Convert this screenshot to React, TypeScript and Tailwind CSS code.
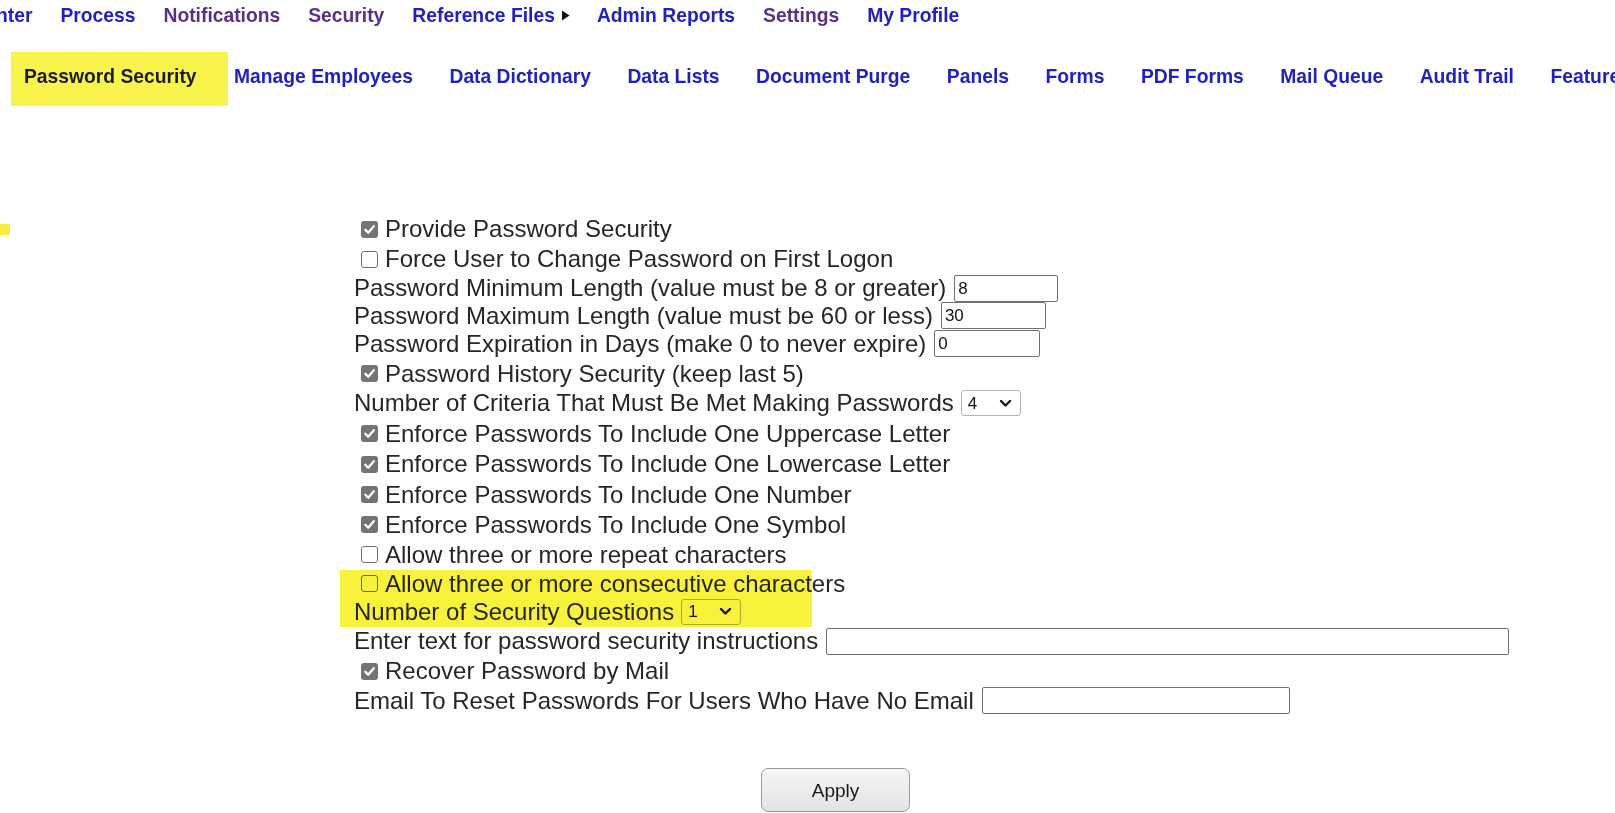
import React from "react";

const BLUE = "text-[#2020c8]";
const PURPLE = "text-[#58308a]";

function Check({ checked }: { checked: boolean }) {
  if (checked) {
    return (
      <span className="ml-[7px] mr-[7px] inline-flex h-[17px] w-[17px] shrink-0 items-center justify-center rounded-[3px] bg-[#747474]">
        <svg width="13" height="13" viewBox="0 0 13 13">
          <polyline points="2.3,6.8 5.2,9.7 10.8,3.2" fill="none" stroke="#ffffff" strokeWidth="2.3" strokeLinecap="round" strokeLinejoin="round" />
        </svg>
      </span>
    );
  }
  return (
    <span className="ml-[7px] mr-[7px] inline-block h-[17px] w-[17px] shrink-0 rounded-[3px] border-[1.5px] border-[#6f6f6f] bg-white" />
  );
}

function CheckRow({ checked, label, h }: { checked: boolean; label: string; h: string }) {
  return (
    <div className={`flex items-center ${h}`}>
      <Check checked={checked} />
      <span>{label}</span>
    </div>
  );
}

function TextInput({ value, w }: { value: string; w: string }) {
  return (
    <span className={`ml-[8px] inline-flex h-[27px] ${w} items-center rounded-[2px] border border-[#707070] bg-white pl-[3px] text-[17px] leading-none text-[#111]`}>
      {value}
    </span>
  );
}

function SelectBox({ value }: { value: string }) {
  return (
    <span className="ml-[7px] inline-flex h-[26px] w-[60px] items-center justify-between rounded-[3px] border border-[#b5b5b5] bg-white pl-[6px] pr-[8px] text-[17px] leading-none text-[#111]">
      <span>{value}</span>
      <svg width="13" height="9" viewBox="0 0 13 9">
        <polyline points="2,2 6.5,6.5 11,2" fill="none" stroke="#111" strokeWidth="2.4" strokeLinecap="round" strokeLinejoin="round" />
      </svg>
    </span>
  );
}

export default function App() {
  const row2 = [
    "Manage Employees",
    "Data Dictionary",
    "Data Lists",
    "Document Purge",
    "Panels",
    "Forms",
    "PDF Forms",
    "Mail Queue",
    "Audit Trail",
    "Features",
  ];
  return (
    <div
      className="relative h-[813px] w-[1615px] overflow-hidden bg-white"
      style={{ fontFamily: '"Liberation Sans", Arial, sans-serif' }}
    >
      {/* top nav */}
      <div className="flex h-[32px] items-center gap-[28px] whitespace-nowrap text-[19.3px] font-bold leading-none">
        <span className={`${BLUE} -ml-[4px]`}>nter</span>
        <span className={BLUE}>Process</span>
        <span className={PURPLE}>Notifications</span>
        <span className={PURPLE}>Security</span>
        <span className={`${BLUE} inline-flex items-center`}>
          Reference Files
          <svg className="ml-[6px]" width="9" height="11" viewBox="0 0 9 11">
            <polygon points="1,0.5 8.5,5.5 1,10.5" fill="#111" />
          </svg>
        </span>
        <span className={`${BLUE} -ml-[1px]`}>Admin Reports</span>
        <span className={PURPLE}>Settings</span>
        <span className={BLUE}>My Profile</span>
      </div>

      {/* second nav */}
      <div className="mt-[20px] flex h-[54px] items-center whitespace-nowrap text-[19.3px] font-bold leading-none">
        <div className="ml-[11px] flex h-[54px] w-[217px] shrink-0 items-center bg-[#f8f44c] pb-[4px] pl-[13px] text-[#1c1c1c]">
          Password Security
        </div>
        <div className={`ml-[6px] flex items-center gap-[36.5px] pb-[4px] ${BLUE}`}>
          {row2.map((t) => (
            <span key={t}>{t}</span>
          ))}
        </div>
      </div>

      {/* yellow marker at left */}
      <div className="absolute left-0 top-[224px] h-[11px] w-[10px] bg-[#f5ef3c]" />

      {/* form */}
      <div className="mt-[108px] pl-[354px] text-[24px] leading-none text-[#262626] whitespace-nowrap">
        <CheckRow checked label="Provide Password Security" h="h-[30px]" />
        <CheckRow checked={false} label="Force User to Change Password on First Logon" h="h-[30px]" />
        <div className="flex h-[28px] items-center">
          <span>Password Minimum Length (value must be 8 or greater)</span>
          <TextInput value="8" w="w-[104px]" />
        </div>
        <div className="flex h-[27.3px] items-center">
          <span>Password Maximum Length (value must be 60 or less)</span>
          <TextInput value="30" w="w-[105px]" />
        </div>
        <div className="flex h-[29.4px] items-center">
          <span>Password Expiration in Days (make 0 to never expire)</span>
          <TextInput value="0" w="w-[106px]" />
        </div>
        <CheckRow checked label="Password History Security (keep last 5)" h="h-[29.8px]" />
        <div className="flex h-[29.9px] items-center">
          <span>Number of Criteria That Must Be Met Making Passwords</span>
          <SelectBox value="4" />
        </div>
        <CheckRow checked label="Enforce Passwords To Include One Uppercase Letter" h="h-[30.4px]" />
        <CheckRow checked label="Enforce Passwords To Include One Lowercase Letter" h="h-[30.6px]" />
        <CheckRow checked label="Enforce Passwords To Include One Number" h="h-[30.6px]" />
        <CheckRow checked label="Enforce Passwords To Include One Symbol" h="h-[30px]" />
        <CheckRow checked={false} label="Allow three or more repeat characters" h="h-[29.8px]" />
        <CheckRow checked={false} label="Allow three or more consecutive characters" h="h-[28px]" />
        <div className="flex h-[28.4px] items-center">
          <span>Number of Security Questions</span>
          <SelectBox value="1" />
        </div>
        <div className="flex h-[30.4px] items-center">
          <span>Enter text for password security instructions</span>
          <TextInput value="" w="w-[683px]" />
        </div>
        <CheckRow checked label="Recover Password by Mail" h="h-[29.8px]" />
        <div className="flex h-[28.8px] items-center">
          <span>Email To Reset Passwords For Users Who Have No Email</span>
          <TextInput value="" w="w-[308px]" />
        </div>

        <div className="mt-[53px] pl-[407px]">
          <button className="h-[44px] w-[149px] rounded-[7px] border border-[#9a9a9a] bg-gradient-to-b from-[#f6f6f6] to-[#e3e3e3] text-[19px] text-[#1a1a1a]">
            Apply
          </button>
        </div>
      </div>

      {/* highlighter overlay */}
      <div className="pointer-events-none absolute left-[340px] top-[570px] h-[57px] w-[472px] bg-[#f8f23a] mix-blend-multiply" />
    </div>
  );
}
